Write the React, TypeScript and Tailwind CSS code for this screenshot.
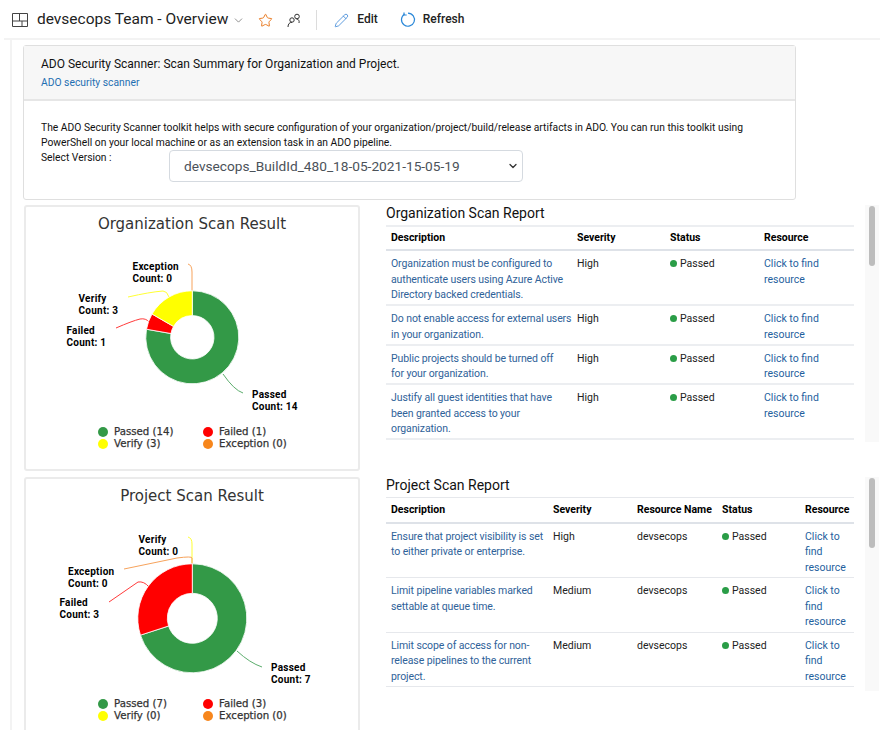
import React from "react";
import { ChevronDown, Pencil, Star } from "lucide-react";

const FONT = "font-['Roboto','Noto_Sans',sans-serif]";

// angle in degrees, clockwise from 12 o'clock
const point = (cx: number, cy: number, r: number, deg: number) => {
  const a = (deg * Math.PI) / 180;
  return [cx + r * Math.sin(a), cy - r * Math.cos(a)];
};

const slice = (cx: number, cy: number, ro: number, ri: number, from: number, to: number) => {
  const [x1, y1] = point(cx, cy, ro, from);
  const [x2, y2] = point(cx, cy, ro, to);
  const [x3, y3] = point(cx, cy, ri, to);
  const [x4, y4] = point(cx, cy, ri, from);
  const large = to - from > 180 ? 1 : 0;
  return `M${x1} ${y1}A${ro} ${ro} 0 ${large} 1 ${x2} ${y2}L${x3} ${y3}A${ri} ${ri} 0 ${large} 0 ${x4} ${y4}Z`;
};

interface ChartLabel {
  name: string;
  count: number;
  x: number;
  y: number;
}

interface ChartProps {
  title: string;
  viewBox: string;
  cx: number;
  cy: number;
  outer: number;
  inner: number;
  slices: { color: string; from: number; to: number }[];
  lines: { color: string; d: string }[];
  labels: ChartLabel[];
  legend: { color: string; text: string }[];
  cardClass: string;
  legendClass: string;
}

const ScanChart = ({ title, viewBox, cx, cy, outer, inner, slices, lines, labels, legend, cardClass, legendClass }: ChartProps) => (
  <div className={`w-[336px] shrink-0 rounded-[3px] border-2 border-[#ebebeb] bg-white ${cardClass}`}>
    <h2 className="mt-[6px] h-[27px] text-center font-['DejaVu_Sans',sans-serif] text-[15px] leading-[22px] text-[#333]">
      {title}
    </h2>
    <svg viewBox={viewBox} className="block h-[180px] w-[332px]">
      {lines.map((l) => (
        <path key={l.d} d={l.d} fill="none" stroke={l.color} strokeWidth="1" />
      ))}
      {slices.map((s) => (
        <path key={s.color} d={slice(cx, cy, outer, inner, s.from, s.to)} fill={s.color} stroke="#fff" strokeWidth="0.8" />
      ))}
      {labels.map((l) => (
        <text key={l.name} fontFamily="Roboto, sans-serif" fontSize="10" fontWeight="700" letterSpacing="0.25" fill="#000">
          <tspan x={l.x} y={l.y}>{l.name}</tspan>
          <tspan x={l.x} y={l.y + 12}>Count: {l.count}</tspan>
        </text>
      ))}
    </svg>
    <div className={`ml-[72px] grid grid-cols-[105px_1fr] font-['DejaVu_Sans',sans-serif] text-[10.2px] leading-[12px] text-[#333] [-webkit-text-stroke:0.25px] ${legendClass}`}>
      {legend.map((item) => (
        <div key={item.text} className="flex items-center gap-[6px]">
          <span className="h-[10px] w-[10px] rounded-full" style={{ background: item.color }} />
          <span>{item.text}</span>
        </div>
      ))}
    </div>
  </div>
);

const Dot = () => <span className="mr-[3px] inline-block h-[7px] w-[7px] rounded-full bg-[#2a9d47]" />;

const Scrollbar = ({ thumb }: { thumb: string }) => (
  <div className="ml-[11px] h-full w-[14px] shrink-0 bg-[#f9f9f9] pl-[4px] pt-[1px]">
    <div className={`w-[6px] rounded-full bg-[#bdbdbd] ${thumb}`} />
  </div>
);

const linkClass = "text-[#1f5f9e]";
const descClass = "whitespace-pre tracking-[-0.1px] text-[#2f6299]";
const cellClass = "pl-[5px] pr-[2px] pt-[5px] align-top";
const headClass = "px-[5px] text-left font-bold text-black";

// line breaks follow the screenshot, the font here is a little wider
const orgRows = [
  "Organization must be configured to\nauthenticate users using Azure Active\nDirectory backed credentials.",
  "Do not enable access for external users\nin your organization.",
  "Public projects should be turned off\nfor your organization.",
  "Justify all guest identities that have\nbeen granted access to your\norganization.",
];

const projectRows = [
  { desc: "Ensure that project visibility is set\nto either private or enterprise.", severity: "High" },
  { desc: "Limit pipeline variables marked\nsettable at queue time.", severity: "Medium" },
  { desc: "Limit scope of access for non-\nrelease pipelines to the current\nproject.", severity: "Medium" },
];

export default function App() {
  return (
    <div className={`h-[730px] w-[880px] overflow-hidden bg-white text-[10.5px] leading-[15.5px] text-[#222] ${FONT}`}>
      <header className="ml-[4px] flex h-[40px] items-center border-b-2 border-[#f3f3f3] pl-[8px] pt-[2px]">
        <svg width="16" height="16" viewBox="0 0 16 16" fill="none" stroke="#444" strokeWidth="1">
          <path d="M.5 1.500h15v13H.5zM.5 9h15M7.500 1.500V9M10 9v5.500" />
        </svg>
        <span className="ml-[9px] text-[15.5px] text-[#222]">devsecops Team - Overview</span>
        <ChevronDown size={13} strokeWidth={1.2} className="ml-[4px] text-[#555]" />
        <Star size={15} strokeWidth={1.5} className="ml-[13px] text-[#e8751a]" />
        <svg width="15" height="15" viewBox="0 0 15 15" fill="none" stroke="#333" strokeWidth="1" className="ml-[14px]">
          <circle cx="10" cy="3.500" r="2.300" />
          <circle cx="5" cy="7" r="2.200" />
          <path d="M1 14c0-3 1.500-4.700 4-4.700M12 10c.6-2-.5-4-2.500-4" />
        </svg>
        <span className="ml-[14px] h-[20px] w-[1px] bg-[#dcdcdc]" />
        <Pencil size={15} strokeWidth={1.2} className="ml-[17px] text-[#2b7cd3]" />
        <span className="ml-[8px] text-[12px] font-medium text-[#222]">Edit</span>
        <svg width="16" height="16" viewBox="0 0 16 16" fill="none" stroke="#2b88d8" strokeWidth="1.2" className="ml-[22px]">
          <path d="M4.500 2.200a6.500 6.500 0 1 0 3.500-1" />
          <path d="M4 .5v2.500h2.700" />
        </svg>
        <span className="ml-[7px] text-[12px] font-medium text-[#222]">Refresh</span>
      </header>

      <main className="ml-[10px] h-[690px] border-l-2 border-[#f3f3f3] pl-[11px] pt-[5px]">
        <section className="h-[155px] w-[773px] rounded-[3px] border border-[#dfdfdf]">
          <div className="h-[55px] border-b-2 border-[#e6e6e6] bg-[#f7f7f7] px-[17px] pt-[9px]">
            <h1 className="text-[12px] leading-[18px] text-[#111]">ADO Security Scanner: Scan Summary for Organization and Project.</h1>
            <a className="mt-[3px] block text-[10.3px] leading-[14px] text-[#1f6fb2]">ADO security scanner</a>
          </div>
          <div className="px-[17px] pt-[19px] text-[10.3px] leading-[15px] text-[#111]">
            <p>
              The ADO Security Scanner toolkit helps with secure configuration of your organization/project/build/release artifacts in ADO. You can run this toolkit using PowerShell on your local machine or as an extension task in an ADO pipeline.
            </p>
            <div className="flex items-start">
              <span className="w-[128px] shrink-0">Select Version :</span>
              <div className="flex h-[32px] w-[354px] items-center justify-between rounded-[4px] border border-[#d5dae0] pl-[14px] pr-[3px] text-[13.7px] text-[#4b5259]">
                <span>devsecops_BuildId_480_18-05-2021-15-05-19</span>
                <ChevronDown size={12} strokeWidth={2.6} className="text-[#333]" />
              </div>
            </div>
          </div>
        </section>

        <div className="mt-[5px] flex h-[272px] items-start pl-[1px]">
          <ScanChart
            title="Organization Scan Result"
            viewBox="26 240 332 180"
            cx={192.3}
            cy={337.3}
            outer={46.5}
            inner={21.7}
            cardClass="h-[266px]"
            legendClass="mt-[6px]"
            slices={[
              { color: "#339947", from: 0, to: 280 },
              { color: "#ff0000", from: 280, to: 300 },
              { color: "#ffff00", from: 300, to: 360 },
            ]}
            lines={[
              { color: "#f7a35c", d: "M188 264Q192 265 192 272V291" },
              { color: "#ffff33", d: "M128 297Q150 292 163 291Q167 291 169 297" },
              { color: "#ff3b3b", d: "M116 328Q132 321 140 319Q146 318 149 322" },
              { color: "#5cad6d", d: "M223 374Q234 390 243 393" },
            ]}
            labels={[
              { name: "Exception", count: 0, x: 132.5, y: 270 },
              { name: "Verify", count: 3, x: 78.5, y: 302 },
              { name: "Failed", count: 1, x: 66.5, y: 334 },
              { name: "Passed", count: 14, x: 252, y: 398 },
            ]}
            legend={[
              { color: "#339947", text: "Passed (14)" },
              { color: "#ff0000", text: "Failed (1)" },
              { color: "#ffff00", text: "Verify (3)" },
              { color: "#f7861c", text: "Exception (0)" },
            ]}
          />
          <div className="ml-[26px] w-[468px] shrink-0">
            <h3 className="h-[20px] text-[14px] leading-[17px] text-[#111]">Organization Scan Report</h3>
            <table className="w-full table-fixed border-collapse border-t-2 border-[#eceef1]">
              <colgroup>
                <col className="w-[186px]" />
                <col className="w-[93px]" />
                <col className="w-[94px]" />
                <col />
              </colgroup>
              <thead>
                <tr className="h-[24px] border-b-2 border-[#dee2e8]">
                  <th className={headClass}>Description</th>
                  <th className={headClass}>Severity</th>
                  <th className={headClass}>Status</th>
                  <th className={headClass}>Resource</th>
                </tr>
              </thead>
              <tbody>
                {orgRows.map((desc) => (
                  <tr key={desc} className="border-b-2 border-[#eceef1]">
                    <td className={`${cellClass} pb-[1.5px] ${descClass}`}>{desc}</td>
                    <td className={cellClass}>High</td>
                    <td className={cellClass}>
                      <Dot />Passed
                    </td>
                    <td className={`${cellClass} ${linkClass}`}>Click to find resource</td>
                  </tr>
                ))}
              </tbody>
            </table>
          </div>
          <div className="h-[237px]">
            <Scrollbar thumb="h-[60px]" />
          </div>
        </div>

        <div className="flex items-start pl-[1px]">
          <ScanChart
            title="Project Scan Result"
            viewBox="26 512 332 180"
            cx={192.3}
            cy={618.3}
            outer={54.5}
            inner={25}
            cardClass="h-[270px]"
            legendClass="mt-[6px]"
            slices={[
              { color: "#339947", from: 0, to: 252 },
              { color: "#ff0000", from: 252, to: 360 },
            ]}
            lines={[
              { color: "#ffff33", d: "M188 537Q192 538 192 544V563" },
              { color: "#f7a35c", d: "M124 569L177 558Q192 556 192 558V564" },
              { color: "#ff3b3b", d: "M109 602L138 582Q144 581 149 587" },
              { color: "#5cad6d", d: "M237 651Q250 663 262 667" },
            ]}
            labels={[
              { name: "Verify", count: 0, x: 138.5, y: 542.5 },
              { name: "Exception", count: 0, x: 68, y: 574.5 },
              { name: "Failed", count: 3, x: 59.5, y: 606 },
              { name: "Passed", count: 7, x: 271, y: 670.5 },
            ]}
            legend={[
              { color: "#339947", text: "Passed (7)" },
              { color: "#ff0000", text: "Failed (3)" },
              { color: "#ffff00", text: "Verify (0)" },
              { color: "#f7861c", text: "Exception (0)" },
            ]}
          />
          <div className="ml-[26px] w-[468px] shrink-0">
            <h3 className="h-[20px] text-[14px] leading-[17px] text-[#111]">Project Scan Report</h3>
            <table className="w-full table-fixed border-collapse border-t border-[#e6e8ec]">
              <colgroup>
                <col className="w-[162px]" />
                <col className="w-[84px]" />
                <col className="w-[85px]" />
                <col className="w-[83px]" />
                <col />
              </colgroup>
              <thead>
                <tr className="h-[25px] border-b-2 border-[#dee2e8]">
                  <th className={headClass}>Description</th>
                  <th className={headClass}>Severity</th>
                  <th className={`${headClass} whitespace-nowrap`}>Resource Name</th>
                  <th className={headClass}>Status</th>
                  <th className={headClass}>Resource</th>
                </tr>
              </thead>
              <tbody>
                {projectRows.map((row) => (
                  <tr key={row.desc} className="border-b border-[#e6e8ec]">
                    <td className={`${cellClass} ${descClass}`}>{row.desc}</td>
                    <td className={cellClass}>{row.severity}</td>
                    <td className={cellClass}>devsecops</td>
                    <td className={cellClass}>
                      <Dot />Passed
                    </td>
                    <td className={`${cellClass} pb-[2px] ${linkClass}`}>Click to find resource</td>
                  </tr>
                ))}
              </tbody>
            </table>
          </div>
          <div className="h-[214px]">
            <Scrollbar thumb="h-[70px]" />
          </div>
        </div>
      </main>
    </div>
  );
}
